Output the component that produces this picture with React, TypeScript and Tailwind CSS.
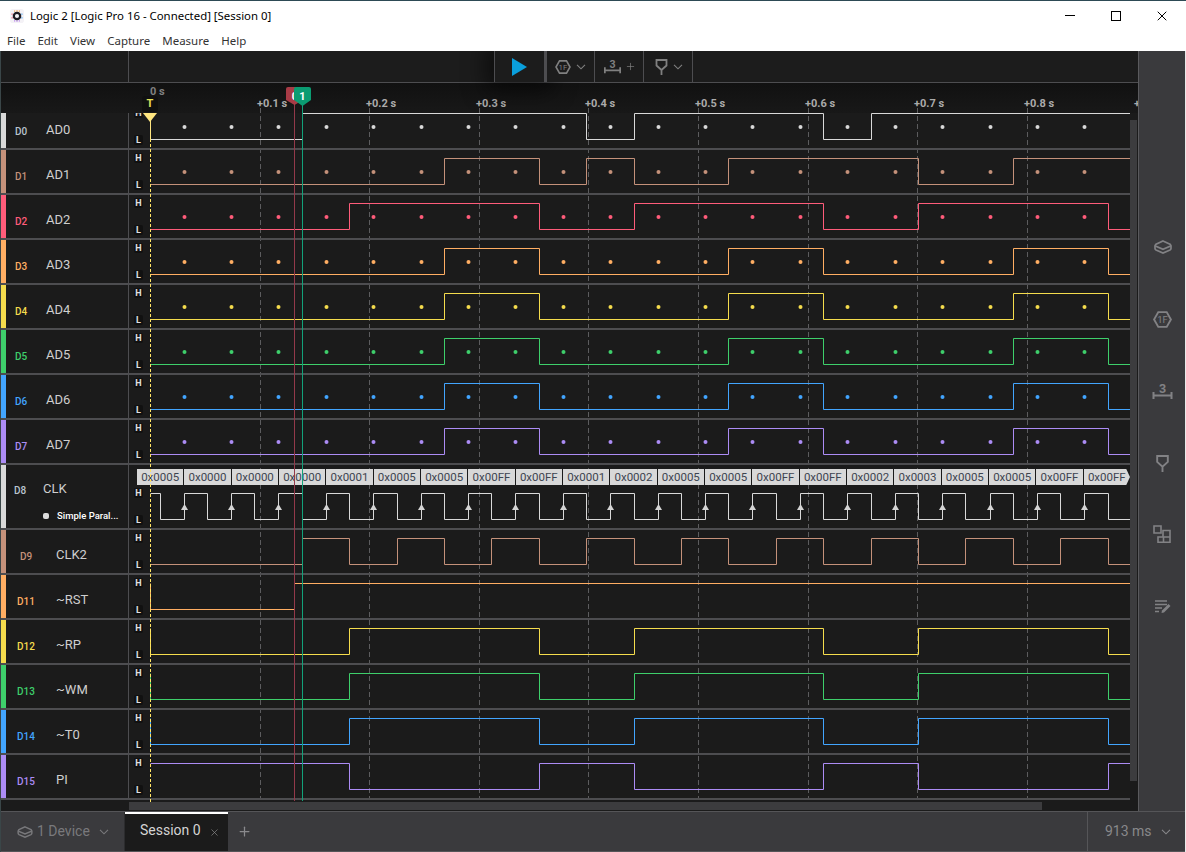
import { Plus, X } from 'lucide-react';

const half = [302, 349, 397, 444, 491, 539, 586, 634, 681, 728, 776, 823, 871, 918, 965, 1013, 1060, 1108];
const rise = [184, 231, 278, 326, 373, 421, 468, 515, 563, 610, 658, 705, 752, 800, 847, 895, 942, 990, 1037, 1084];
const clock = [160, 207, 254, ...half, ...rise].sort((a, b) => a - b);
const bus = [444, 539, 728, 823, 1013, 1108];
const rp = [349, 539, 634, 823, 918, 1108];
const gridX = [260, 369, 479, 588, 698, 808, 917, 1027, 1137];
const ticks = ['+0.1 s', '+0.2 s', '+0.3 s', '+0.4 s', '+0.5 s', '+0.6 s', '+0.7 s', '+0.8 s', '+'];
const words = ['0x0005', '0x0000', '0x0000', '0x0000', '0x0001', '0x0005', '0x0005', '0x00FF', '0x00FF', '0x0001', '0x0002', '0x0005', '0x0005', '0x00FF', '0x00FF', '0x0002', '0x0003', '0x0005', '0x0005', '0x00FF', '0x00FF'];

type Kind = 'first' | 'regular' | 'clock' | 'late';

type Channel = {
  id: string;
  name: string;
  color: string;
  kind: Kind;
  start?: boolean;
  lead?: boolean;
  dots?: boolean;
  edges: number[];
};

const channels: Channel[] = [
  { id: 'D0', name: 'AD0', color: '#d9d9d9', kind: 'first', dots: true, edges: [302, 586, 634, 823, 871] },
  { id: 'D1', name: 'AD1', color: '#c4917a', kind: 'regular', dots: true, edges: [444, 539, 586, 634, 728, 918, 1013] },
  { id: 'D2', name: 'AD2', color: '#ff5c7a', kind: 'regular', dots: true, edges: rp },
  { id: 'D3', name: 'AD3', color: '#ffae63', kind: 'regular', dots: true, edges: bus },
  { id: 'D4', name: 'AD4', color: '#f5dc4d', kind: 'regular', dots: true, edges: bus },
  { id: 'D5', name: 'AD5', color: '#3ecf6b', kind: 'regular', dots: true, edges: bus },
  { id: 'D6', name: 'AD6', color: '#42a5ff', kind: 'regular', dots: true, edges: bus },
  { id: 'D7', name: 'AD7', color: '#ac8cf5', kind: 'regular', dots: true, edges: bus },
  { id: 'D8', name: 'CLK', color: '#d9d9d9', kind: 'clock', start: true, edges: clock },
  { id: 'D9', name: 'CLK2', color: '#c4917a', kind: 'late', edges: half },
  { id: 'D11', name: '~RST', color: '#ffae63', kind: 'late', lead: true, edges: [294] },
  { id: 'D12', name: '~RP', color: '#f5dc4d', kind: 'late', lead: true, edges: rp },
  { id: 'D13', name: '~WM', color: '#3ecf6b', kind: 'late', lead: true, edges: rp },
  { id: 'D14', name: '~T0', color: '#42a5ff', kind: 'late', lead: true, edges: rp },
  { id: 'D15', name: 'PI', color: '#ac8cf5', kind: 'late', start: true, edges: rp },
];

const layouts = {
  first: { h: 'h-[37px]', height: 35, high: 0.5, top: 'top-[-2px] h-[7px] leading-[4px]', bottom: 'top-[22px] h-[10px] leading-[10px]', label: 'pb-[2px]', idBox: 'w-[30px]', nameBox: 'ml-[10px]' },
  regular: { h: 'h-[45px]', height: 43, high: 8.5, top: 'top-[3px] h-[10px] leading-[10px]', bottom: 'top-[30px] h-[10px] leading-[10px]', label: 'pt-[7px]', idBox: 'w-[30px]', nameBox: 'ml-[10px]' },
  clock: { h: 'h-[65px]', height: 63, high: 28.5, top: 'top-[23px] h-[10px] leading-[10px]', bottom: 'top-[50px] h-[10px] leading-[10px]', label: 'pt-0', idBox: 'w-[28px]', nameBox: 'ml-[9px]' },
  late: { h: 'h-[45px]', height: 43, high: 8.5, top: 'top-[3px] h-[10px] leading-[10px]', bottom: 'top-[30px] h-[10px] leading-[10px]', label: 'pt-[7px]', idBox: 'w-[40px]', nameBox: 'ml-[10px]' },
};

function wavePath(ch: Channel, high: number) {
  const low = high + 26;
  let level = ch.start ? high : low;
  let d = ch.lead ? `M150.5 ${high}V${low}` : `M150.5 ${level}`;
  for (const x of ch.edges) {
    level = level === high ? low : high;
    d += `H${x + 0.5}V${level}`;
  }
  return d + 'H1130';
}

function Chevron({ className }: { className: string }) {
  return (
    <svg className={className} width="10" height="6" viewBox="0 0 10 6" fill="none" stroke="currentColor" strokeWidth="1.1">
      <path d="M1 .8 5 4.8 9 .8" />
    </svg>
  );
}

function LayerIcon({ w, h }: { w: number; h: number }) {
  return (
    <svg width={w} height={h} viewBox="0 0 18 14" fill="none" stroke="currentColor" strokeWidth="1.7">
      <path d="M9 1 16 4.1Q17.2 5.2 16 6.2L9 9.3 2 6.2Q.8 5.2 2 4.1Z" />
      <path d="M1 5.2V8.6Q1 9.5 2 10L9 13 16 10Q17 9.5 17 8.6V5.2" />
    </svg>
  );
}

function HexIcon({ w, h }: { w: number; h: number }) {
  return (
    <svg width={w} height={h} viewBox="0 0 18 16" fill="none" stroke="currentColor" strokeWidth="1.8">
      <path d="M5 1H13L17 8 13 15H5L1 8Z" />
      <text x="9" y="11.4" textAnchor="middle" fontSize="9" stroke="none" fill="currentColor">1F</text>
    </svg>
  );
}

function MeasureIcon({ w, h }: { w: number; h: number }) {
  return (
    <svg width={w} height={h} viewBox="0 0 20 18" fill="none" stroke="currentColor" strokeWidth="2">
      <path d="M1 10V17M19 10V17M1 13.5H19" />
      <text x="10" y="10.5" textAnchor="middle" fontSize="12.5" fontWeight="700" stroke="none" fill="currentColor">3</text>
    </svg>
  );
}

function PinIcon({ w, h }: { w: number; h: number }) {
  return (
    <svg width={w} height={h} viewBox="0 0 12 16" fill="none" stroke="currentColor" strokeWidth="1.8">
      <path d="M1 1H11V6.5L6 11 1 6.5ZM6 11V16" />
    </svg>
  );
}

function BlocksIcon() {
  return (
    <svg width="18" height="18" viewBox="0 0 18 18" fill="none" stroke="currentColor" strokeWidth="1.6">
      <path d="M1 1H8V8H1ZM10 5.5H17V12H10ZM5 12H17V17.2H5ZM10.5 12V17" />
    </svg>
  );
}

function NotesIcon() {
  return (
    <svg width="16" height="14" viewBox="0 0 16 14" fill="none" stroke="currentColor" strokeWidth="1.6">
      <path d="M0 1H12M0 4.5H12M0 8H7M0 11.5H4" />
      <path d="M6.5 13 7 10.5 13.5 4 15.5 6 9 12.5Z" fill="currentColor" stroke="none" />
    </svg>
  );
}

function Logo() {
  return (
    <svg width="14" height="14" viewBox="0 0 15 15">
      <rect width="15" height="15" rx="3" fill="#f4f2f6" />
      <path d="M5 1.5V3M7.5 1.2V3M10 1.5V3" stroke="#f59e42" strokeWidth="1" />
      <path d="M5 12V13.5M7.5 12V13.8M10 12V13.5" stroke="#b57bee" strokeWidth="1" />
      <path d="M1.5 5.5H3M1.5 9.5H3" stroke="#ef4f6b" strokeWidth="1" />
      <path d="M12 5.5H13.5M12 9.5H13.5" stroke="#3ea0f0" strokeWidth="1" />
      <circle cx="7.5" cy="7.5" r="3.4" fill="none" stroke="#1d1b22" strokeWidth="2.4" />
    </svg>
  );
}

function TitleBar() {
  return (
    <div className="relative z-40 flex h-[30px] items-center border-t border-[#2d4a55] bg-white pl-[10px] font-['Noto_Sans',sans-serif] text-[11.4px] text-black">
      <Logo />
      <span className="ml-[6px] flex-1 leading-none">Logic 2 [Logic Pro 16 - Connected] [Session 0]</span>
      <div className="mr-[1px] flex items-center">
        <div className="flex h-[29px] w-[46px] items-center justify-center">
          <div className="h-px w-[10px] bg-black" />
        </div>
        <div className="flex h-[29px] w-[46px] items-center justify-center">
          <div className="h-[10px] w-[10px] border border-black" />
        </div>
        <div className="flex h-[29px] w-[46px] items-center justify-center">
          <X size={16} strokeWidth={1} absoluteStrokeWidth className="text-black" />
        </div>
      </div>
    </div>
  );
}

function MenuBar() {
  return (
    <div className="relative z-40 flex h-[21px] items-center gap-[12px] bg-white pl-[7px] font-['Noto_Sans',sans-serif] text-[11.5px] text-[#333]">
      {['File', 'Edit', 'View', 'Capture', 'Measure', 'Help'].map((m) => (
        <span key={m}>{m}</span>
      ))}
    </div>
  );
}

function Toolbar() {
  return (
    <div className="relative z-30 flex h-[32px] border-b border-[#4d4d50] bg-[#1c1c1c] text-[#808080]">
      <div className="w-[128px] border-r border-[#4d4d50]" />
      <div className="ml-[365px] flex">
        <div className="flex w-[50px] items-center justify-center border-l border-[#4d4d50] bg-[#1c1c1c] shadow-[0_0_22px_8px_rgba(0,0,0,0.55)]">
          <svg width="15" height="18" viewBox="0 0 15 18" className="ml-[-1px]">
            <path d="M0 0 15 9 0 18Z" fill="#0a9fdc" />
          </svg>
        </div>
        <div className="flex w-[51px] items-center gap-[5px] border-l-[3px] border-r border-[#4d4d50] bg-[#1c1c1c] pl-[8px]">
          <HexIcon w={16} h={14} />
          <Chevron className="" />
        </div>
        <div className="flex w-[49px] items-center gap-[4px] border-r border-[#4d4d50] bg-[#1c1c1c] pl-[9px]">
          <MeasureIcon w={17} h={17} />
          <Plus size={11} strokeWidth={1.5} />
        </div>
        <div className="flex w-[49px] items-center gap-[5px] border-r border-[#4d4d50] bg-[#1c1c1c] pl-[11px]">
          <PinIcon w={13} h={16} />
          <Chevron className="" />
        </div>
      </div>
    </div>
  );
}

function TimeHeader() {
  return (
    <div className="relative h-[30px] overflow-hidden bg-gradient-to-b from-[#111111] to-[#181818]">
      <span className="absolute left-[149px] top-[1px] text-[11px] font-bold text-[#808080]">0 s</span>
      <span className="absolute left-[141px] top-[13px] h-[16px] w-[16px] rounded-[3px] bg-[#101010] text-center text-[11px] font-bold leading-[16px] text-[#e3e05a]">T</span>
      {ticks.map((t, i) => (
        <span
          key={t}
          className="absolute top-[13px] whitespace-nowrap text-[11px] font-bold text-[#ababab]"
          style={{ left: gridX[i] - 4 }}
        >
          {t}
        </span>
      ))}
    </div>
  );
}

function Row({ ch }: { ch: Channel }) {
  const l = layouts[ch.kind];
  return (
    <div className={`flex ${l.h} border-b-2 border-[#4d4d50]`}>
      <div className="flex w-[128px] flex-none border-r border-[#4d4d50] bg-[#1b1b1b]">
        <div className="w-[5px] flex-none" style={{ backgroundColor: ch.color }} />
        {ch.kind === 'clock' ? (
          <div className="flex flex-col pt-[16px]">
            <div className="flex h-[16px] items-center">
              <span className="mt-[3px] w-[28px] text-center text-[10px] font-medium text-[#b9c4cf]">{ch.id}</span>
              <span className="ml-[9px] text-[13px] text-[#cfcfcf]">{ch.name}</span>
            </div>
            <div className="mt-[12px] flex h-[14px] items-center pl-[37px]">
              <span className="h-[6px] w-[6px] rounded-[2px] bg-[#dddddd]" />
              <span className="ml-[8px] whitespace-nowrap text-[9.5px] font-medium text-white">Simple Paral...</span>
            </div>
          </div>
        ) : (
          <div className={`flex items-center ${l.label}`}>
            <span className={`${l.idBox} mt-[3px] text-center text-[10px] font-medium`} style={{ color: ch.color === '#d9d9d9' ? '#b9c4cf' : ch.color }}>
              {ch.id}
            </span>
            <span className={`${l.nameBox} text-[13px] text-[#cfcfcf]`}>{ch.name}</span>
          </div>
        )}
      </div>
      <div className="relative flex-1 overflow-hidden">
        <svg className="block" width="1001" height={l.height} viewBox={`129 0 1001 ${l.height}`} fill="none">
          <path d={wavePath(ch, l.high)} stroke={ch.color} strokeWidth="1" />
          {ch.dots && rise.map((x) => <circle key={x} cx={x + 0.5} cy={l.high + 13.5} r="2" fill={ch.color} />)}
          {ch.kind === 'clock' && rise.map((x) => <path key={x} d={`M${x + 0.5} 39 ${x + 4} 45H${x - 3}Z`} fill="#d4d4d4" />)}
        </svg>
        <span className={`absolute left-[5px] ${l.top} w-[9px] overflow-hidden rounded-[2px] bg-[#111] text-center text-[9px] font-bold text-[#e0e0e0]`}>H</span>
        <span className={`absolute left-[5px] ${l.bottom} w-[9px] rounded-[2px] bg-[#111] text-center text-[9px] font-bold text-[#e0e0e0]`}>L</span>
        {ch.kind === 'clock' && (
          <div className="absolute left-[8px] right-0 top-[4px] grid h-[16px] grid-cols-[repeat(21,1fr)] gap-px">
            {words.map((w, i) => (
              <span
                key={i}
                className={`bg-[#d8d8d8] text-center text-[11.5px] leading-[16px] text-[#3d4450] ${i === 20 ? '[clip-path:polygon(0_0,92%_0,100%_50%,92%_100%,0_100%)]' : ''}`}
              >
                {w}
              </span>
            ))}
          </div>
        )}
      </div>
    </div>
  );
}

function Timeline() {
  return (
    <div className="relative flex flex-1 flex-col bg-[#1b1b1b]">
      <TimeHeader />
      <svg className="absolute left-0 top-0 z-[1]" width="1137" height="728" viewBox="1 83 1137 728" fill="none">
        {gridX.slice(0, 8).map((x) => (
          <path key={x} d={`M${x + 0.5} 108V799`} stroke="#5c5c5e" strokeDasharray="5 3" />
        ))}
      </svg>
      <div className="relative z-[2] flex">
        <div className="w-[1129px]">
          {channels.map((ch) => (
            <Row key={ch.id} ch={ch} />
          ))}
        </div>
        <div className="w-[8px] pt-[7px]">
          <div className="h-[661px] w-[7px] bg-[#3c3c3e]" />
        </div>
      </div>
      <div className="relative z-[2] h-[11px] pl-[128px] pt-[2px]">
        <div className="h-[8px] w-[913px] bg-[#3c3c3e]" />
      </div>
      <svg className="absolute left-0 top-0 z-20" width="1137" height="728" viewBox="1 83 1137 728" fill="none">
        <path d="M150.5 113V139" stroke="#ffe680" />
        <path d="M150.5 139V802" stroke="#ffe566" strokeDasharray="3 2" />
        <path d="M143 113H157L150 122Z" fill="#ffe680" />
        <path d="M294.5 100V801" stroke="#93394a" />
        <path d="M288 87H300Q303 87 303 89V100L294.5 105 286 100V89Q286 87 288 87Z" fill="#a83b46" />
        <text x="295" y="100" textAnchor="middle" className="fill-white text-[11px] font-bold">0</text>
        <path d="M302.5 100V801" stroke="#12a27a" />
        <path d="M296 87H309Q311 87 311 89V100L302.5 106 294 100V89Q294 87 296 87Z" fill="#0b9c72" />
        <text x="302.5" y="100" textAnchor="middle" className="fill-white text-[11px] font-bold">1</text>
      </svg>
    </div>
  );
}

function Sidebar() {
  return (
    <div className="flex w-[47px] flex-none flex-col items-center border-l border-[#5a5a5d] bg-[#3a3a3d] pl-[1px] text-[#828285]">
      <div className="mt-[189px]"><LayerIcon w={18} h={14} /></div>
      <div className="mt-[57px]"><HexIcon w={19} h={17} /></div>
      <div className="mt-[54px]"><MeasureIcon w={21} h={18} /></div>
      <div className="mt-[55px]"><PinIcon w={13} h={17} /></div>
      <div className="ml-[-1px] mt-[53px]"><BlocksIcon /></div>
      <div className="ml-[1px] mt-[57px]"><NotesIcon /></div>
    </div>
  );
}

function BottomBar() {
  return (
    <div className="flex h-[41px] flex-none border-t border-b border-[#555558] bg-[#3a3a3d] text-[14px]">
      <div className="flex w-[124px] items-center border-r border-[#2c2c2e] pl-[16px] text-[#79797c]">
        <LayerIcon w={16} h={12} />
        <span className="ml-[4px]">1 Device</span>
        <Chevron className="ml-[9px]" />
      </div>
      <div className="flex w-[103px] items-center border-t-2 border-white bg-[#1b1b1b] pl-[15px] text-[#d4d4d4]">
        <span className="mt-[-4px]">Session 0</span>
        <X size={11} strokeWidth={1.5} className="ml-[8px] text-[#8a8a8a]" />
      </div>
      <div className="flex w-[33px] items-center justify-center text-[#8a8a8d]">
        <Plus size={15} strokeWidth={2} />
      </div>
      <div className="flex-1" />
      <div className="flex w-[98px] items-center border-l border-[#555558] pl-[17px] text-[#88888b]">
        <span>913 ms</span>
        <Chevron className="ml-[9px]" />
      </div>
    </div>
  );
}

export default function App() {
  return (
    <div className="flex h-[852px] w-[1186px] flex-col overflow-hidden font-[Roboto,sans-serif]">
      <TitleBar />
      <MenuBar />
      <div className="flex min-h-0 flex-1 border-l border-r border-l-[#3a4648] border-r-[#e8e8e8]">
        <div className="flex w-[1137px] flex-none flex-col">
          <Toolbar />
          <Timeline />
        </div>
        <Sidebar />
      </div>
      <div className="border-l border-r border-l-[#3a4648] border-r-[#e8e8e8]">
        <BottomBar />
      </div>
    </div>
  );
}
